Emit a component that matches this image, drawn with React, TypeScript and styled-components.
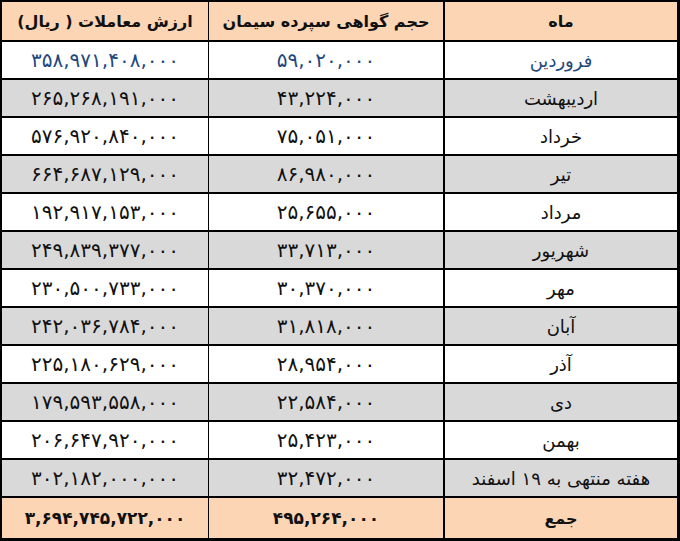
import styled, { createGlobalStyle } from "styled-components"

const GlobalStyle = createGlobalStyle`
  html, body {
    margin: 0;
    padding: 0;
    background: white;
  }
`

const rows = [
  { month: "فروردین", volume: "۵۹,۰۲۰,۰۰۰", value: "۳۵۸,۹۷۱,۴۰۸,۰۰۰" },
  { month: "اردیبهشت", volume: "۴۳,۲۲۴,۰۰۰", value: "۲۶۵,۲۶۸,۱۹۱,۰۰۰" },
  { month: "خرداد", volume: "۷۵,۰۵۱,۰۰۰", value: "۵۷۶,۹۲۰,۸۴۰,۰۰۰" },
  { month: "تیر", volume: "۸۶,۹۸۰,۰۰۰", value: "۶۶۴,۶۸۷,۱۲۹,۰۰۰" },
  { month: "مرداد", volume: "۲۵,۶۵۵,۰۰۰", value: "۱۹۲,۹۱۷,۱۵۳,۰۰۰" },
  { month: "شهریور", volume: "۳۳,۷۱۳,۰۰۰", value: "۲۴۹,۸۳۹,۳۷۷,۰۰۰" },
  { month: "مهر", volume: "۳۰,۳۷۰,۰۰۰", value: "۲۳۰,۵۰۰,۷۳۳,۰۰۰" },
  { month: "آبان", volume: "۳۱,۸۱۸,۰۰۰", value: "۲۴۲,۰۳۶,۷۸۴,۰۰۰" },
  { month: "آذر", volume: "۲۸,۹۵۴,۰۰۰", value: "۲۲۵,۱۸۰,۶۲۹,۰۰۰" },
  { month: "دی", volume: "۲۲,۵۸۴,۰۰۰", value: "۱۷۹,۵۹۳,۵۵۸,۰۰۰" },
  { month: "بهمن", volume: "۲۵,۴۲۳,۰۰۰", value: "۲۰۶,۶۴۷,۹۲۰,۰۰۰" },
  { month: "هفته منتهی به ۱۹ اسفند", volume: "۳۲,۴۷۲,۰۰۰", value: "۳۰۲,۱۸۲,۰۰۰,۰۰۰" },
]

const Table = styled.table`
  direction: rtl;
  width: 680px;
  table-layout: fixed;
  border-collapse: separate;
  border-spacing: 0;
  border-top: 2px solid black;
  border-right: 3px solid black;
  border-left: 2px solid black;
  border-bottom: 3px solid black;
  font-family: "DejaVu Sans", sans-serif;
  color: #111;
`

const Row = styled.tr<{ $tone: "head" | "white" | "grey" | "total" }>`
  background: ${(p) =>
    p.$tone === "head" || p.$tone === "total"
      ? "#fcd5b4"
      : p.$tone === "grey"
      ? "#d9d9d9"
      : "white"};
  height: ${(p) => (p.$tone === "white" || p.$tone === "grey" ? 38 : 40)}px;
`

const Cell = styled.td<{ $divider: number; $last?: boolean; $bold?: boolean; $blue?: boolean }>`
  padding: 0;
  text-align: center;
  vertical-align: middle;
  font-size: ${(p) => (p.$bold ? 16 : 18)}px;
  font-weight: ${(p) => (p.$bold ? "bold" : "normal")};
  color: ${(p) => (p.$blue ? "#1f497d" : "#111")};
  border-bottom: ${(p) => (p.$last ? "none" : "2px solid black")};
  border-left: ${(p) => (p.$divider ? `${p.$divider}px solid black` : "none")};
  white-space: nowrap;
`

const Num = styled.span<{ $spacing: number; $size: number }>`
  letter-spacing: ${(p) => p.$spacing}px;
  font-size: ${(p) => p.$size}px;
`

export default function App() {
  return (
    <>
      <GlobalStyle />
      <Table>
        <colgroup>
          <col style={{ width: 234 }} />
          <col style={{ width: 235 }} />
          <col style={{ width: 206 }} />
        </colgroup>
        <tbody>
          <Row $tone="head">
            <Cell $divider={2} $bold>ماه</Cell>
            <Cell $divider={1} $bold>حجم گواهی سپرده سیمان</Cell>
            <Cell $divider={0} $bold>ارزش معاملات ( ریال)</Cell>
          </Row>
          {rows.map((r, i) => (
            <Row key={r.month} $tone={i % 2 ? "grey" : "white"}>
              <Cell $divider={2} $blue={i === 0}>{r.month}</Cell>
              <Cell $divider={1} $blue={i === 0}>
                <Num $spacing={3.6} $size={20}>{r.volume}</Num>
              </Cell>
              <Cell $divider={0} $blue={i === 0}>
                <Num $spacing={4} $size={20}>{r.value}</Num>
              </Cell>
            </Row>
          ))}
          <Row $tone="total">
            <Cell $divider={2} $last $bold>جمع</Cell>
            <Cell $divider={1} $last $bold>
              <Num $spacing={1.5} $size={17}>۴۹۵,۲۶۴,۰۰۰</Num>
            </Cell>
            <Cell $divider={0} $last $bold>
              <Num $spacing={1.5} $size={17}>۳,۶۹۴,۷۴۵,۷۲۲,۰۰۰</Num>
            </Cell>
          </Row>
        </tbody>
      </Table>
    </>
  )
}
